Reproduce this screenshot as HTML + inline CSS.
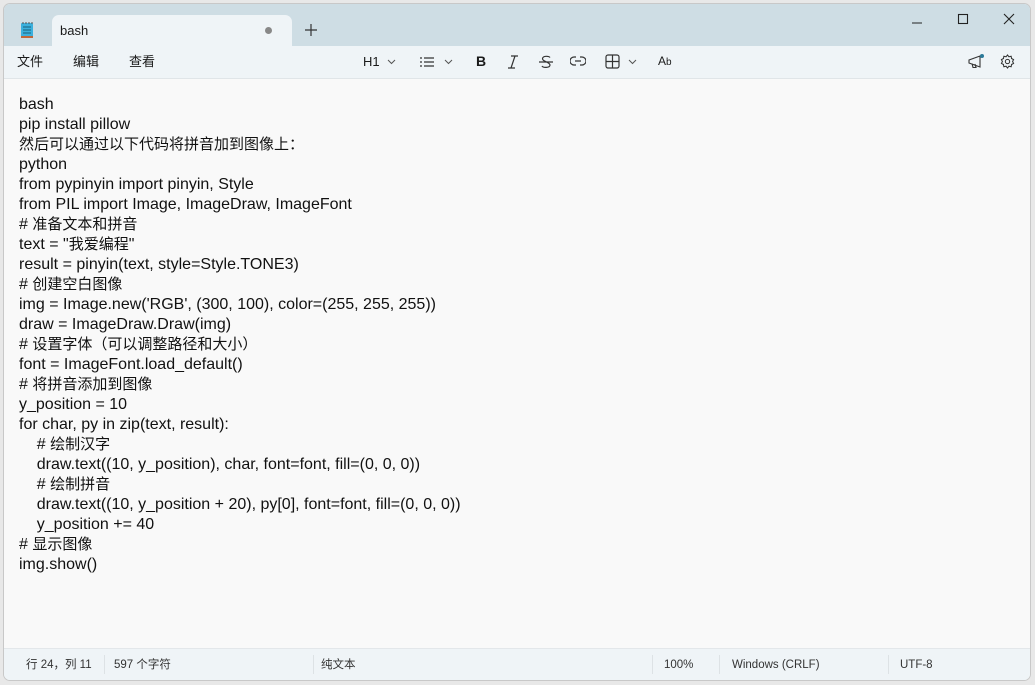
<!DOCTYPE html>
<html><head><meta charset="utf-8"><style>
body{margin:0;width:1035px;height:685px;background:#e8e8e8;font-family:"Liberation Sans","Noto Sans CJK SC",sans-serif;overflow:hidden;position:relative}
.win{position:absolute;left:3px;top:3px;width:1028px;height:678px;background:#f9f9f9;border:1px solid #c8c8c8;border-radius:7px;overflow:hidden;box-sizing:border-box}
.title{position:absolute;left:0;top:0;right:0;height:42px;background:#cedde4}
.tab{position:absolute;left:48px;top:11px;width:240px;height:34px;background:#eff4f7;border-radius:7px 7px 0 0}
.tab span{position:absolute;left:8px;top:8px;font-size:13px;color:#1a1a1a}
.tab i{position:absolute;left:213px;top:12px;width:7px;height:7px;border-radius:50%;background:#888}
.tool{position:absolute;left:0;top:42px;right:0;height:32px;background:#eff4f7;border-bottom:1px solid #e0e5e8}
.menu{position:absolute;top:8px;font-size:13px;line-height:16px;color:#1a1a1a}
.content{position:absolute;left:15px;top:91px;font-size:16px;line-height:20px;color:#111;white-space:pre}
.c{font-size:15px}
.status{position:absolute;left:0;bottom:0;right:0;height:31px;background:#eff4f7;border-top:1px solid #e3e7ea;font-size:11.5px;line-height:14px;color:#333}
.status span{position:absolute;top:9px}
.sep{position:absolute;top:6px;width:1px;height:19px;background:#dde2e5}
svg{position:absolute}
</style></head><body>
<div class="win">
<div class="title">
<svg style="left:16px;top:17px" width="14" height="18" viewBox="0 0 14 18"><rect x="1" y="2" width="12" height="15" rx="1" fill="#3bb0dd"/><rect x="1" y="15" width="12" height="2" fill="#c0673a"/><path d="M3 6h8M3 9h8M3 12h8" stroke="#1a5f7a" stroke-width="1"/><path d="M3 1v2M6 1v2M9 1v2M12 1v2" stroke="#555" stroke-width="1"/></svg>
<div class="tab"><span>bash</span><i></i></div>
<svg style="left:301px;top:20px" width="12" height="12"><path d="M6 0v12M0 6h12" stroke="#333" stroke-width="1.2"/></svg>
<svg style="left:907px;top:13px" width="12" height="12"><path d="M1 6h10" stroke="#222" stroke-width="1"/></svg>
<svg style="left:953px;top:9px" width="12" height="12"><rect x="1.5" y="1.5" width="9" height="9" fill="none" stroke="#222" stroke-width="1.1"/></svg>
<svg style="left:999px;top:9px" width="12" height="12"><path d="M1 1l10 10M11 1L1 11" stroke="#222" stroke-width="1.1"/></svg>
</div>
<div class="tool">
<div class="menu" style="left:13px">文件</div>
<div class="menu" style="left:69px">编辑</div>
<div class="menu" style="left:125px">查看</div>
<div class="menu" style="left:359px">H1</div>
<svg style="left:383px;top:13px" width="9" height="6"><path d="M1 1l3.5 3.5L8 1" stroke="#555" fill="none"/></svg>
<svg style="left:416px;top:11px" width="14" height="10"><path d="M0 1h2M0 5h2M0 9h2M4 1h10M4 5h10M4 9h10" stroke="#333" stroke-width="1.2"/></svg>
<svg style="left:440px;top:13px" width="9" height="6"><path d="M1 1l3.5 3.5L8 1" stroke="#555" fill="none"/></svg>
<div class="menu" style="left:472px;font-weight:bold;font-size:14px;top:7px">B</div>
<svg style="left:503px;top:9px" width="12" height="14"><path d="M4 1h7M1 13h7M8 1L4 13" stroke="#333" stroke-width="1.2" fill="none"/></svg>
<svg style="left:535px;top:9px" width="14" height="14"><path d="M0 7h14M11 2.5C10 1 4 0.5 3.5 3.5S11 7 11 10 4 13 3 11" stroke="#333" stroke-width="1.2" fill="none"/></svg>
<svg style="left:566px;top:10px" width="16" height="10"><path d="M6 1H4a4 4 0 000 8h2M10 1h2a4 4 0 010 8h-2M5 5h6" stroke="#333" stroke-width="1.2" fill="none"/></svg>
<svg style="left:601px;top:8px" width="15" height="15"><rect x="1" y="1" width="13" height="13" rx="2" fill="none" stroke="#333" stroke-width="1.2"/><path d="M7.5 1v13M1 7.5h13" stroke="#333" stroke-width="1.2"/></svg>
<svg style="left:624px;top:13px" width="9" height="6"><path d="M1 1l3.5 3.5L8 1" stroke="#555" fill="none"/></svg>
<div class="menu" style="left:654px;font-size:12px;top:7px">A<span style="font-size:10px">b</span></div>
<svg style="left:963px;top:8px" width="18" height="16"><path d="M2 6l11-4v11L2 9z M5 9.5l1 4h3l-1-3.5" stroke="#333" stroke-width="1.1" fill="none"/><circle cx="15" cy="2" r="2" fill="#2b7a99"/></svg>
<svg style="left:996px;top:8px" width="15" height="15" viewBox="0 0 16 16"><path d="M8 1l1.5 2 2.4-.6.4 2.4 2.2 1.2L13.4 8l1.1 2-2.2 1.2-.4 2.4-2.4-.6L8 15l-1.5-2-2.4.6-.4-2.4L1.5 10 2.6 8 1.5 6l2.2-1.2.4-2.4 2.4.6z" fill="none" stroke="#333" stroke-width="1.1"/><circle cx="8" cy="8" r="2.3" fill="none" stroke="#333" stroke-width="1.1"/></svg>
</div>
<div class="content">bash
pip install pillow
<span class="c">然后可以通过以下代码将拼音加到图像上：</span>
python
from pypinyin import pinyin, Style
from PIL import Image, ImageDraw, ImageFont
# <span class="c">准备文本和拼音</span>
text = "<span class="c">我爱编程</span>"
result = pinyin(text, style=Style.TONE3)
# <span class="c">创建空白图像</span>
img = Image.new('RGB', (300, 100), color=(255, 255, 255))
draw = ImageDraw.Draw(img)
# <span class="c">设置字体（可以调整路径和大小）</span>
font = ImageFont.load_default()
# <span class="c">将拼音添加到图像</span>
y_position = 10
for char, py in zip(text, result):
    # <span class="c">绘制汉字</span>
    draw.text((10, y_position), char, font=font, fill=(0, 0, 0))
    # <span class="c">绘制拼音</span>
    draw.text((10, y_position + 20), py[0], font=font, fill=(0, 0, 0))
    y_position += 40
# <span class="c">显示图像</span>
img.show()</div>
<div class="status">
<span style="left:22px">行 24，列 11</span><div class="sep" style="left:100px"></div>
<span style="left:110px">597 个字符</span><div class="sep" style="left:309px"></div>
<span style="left:317px">纯文本</span><div class="sep" style="left:648px"></div>
<span style="left:660px">100%</span><div class="sep" style="left:715px"></div>
<span style="left:728px">Windows (CRLF)</span><div class="sep" style="left:884px"></div>
<span style="left:896px">UTF-8</span>
</div>
</div>
</body></html>
